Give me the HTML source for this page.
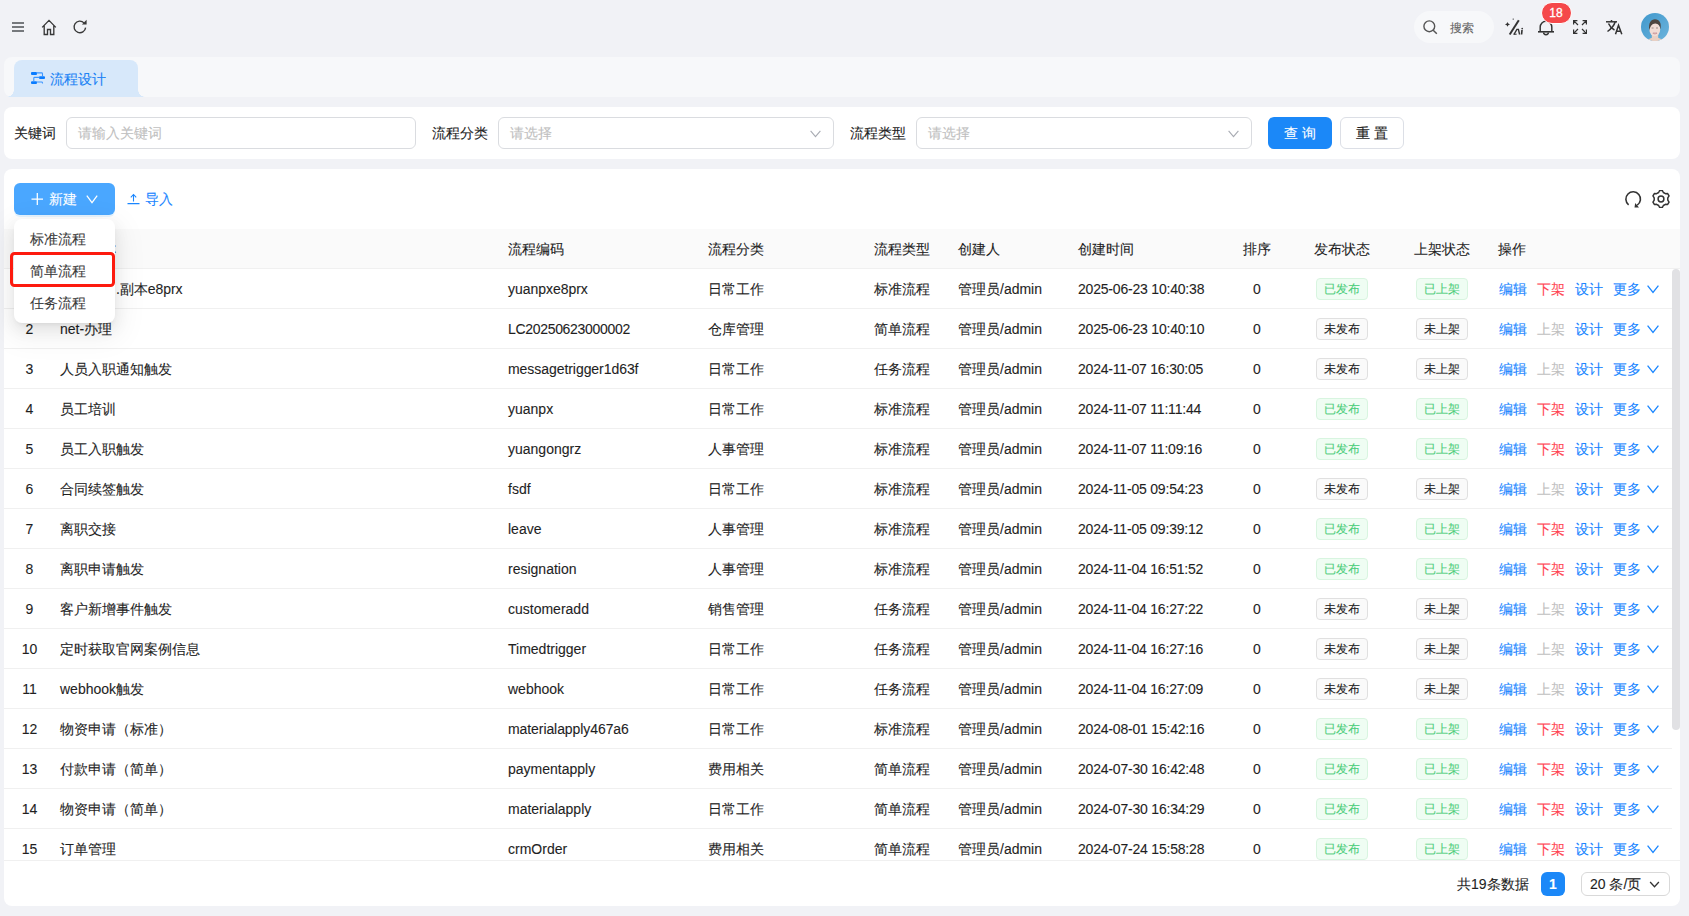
<!DOCTYPE html>
<html><head><meta charset="utf-8">
<style>
*{box-sizing:border-box;margin:0;padding:0}
html,body{width:1689px;height:916px;overflow:hidden;background:#f1f2f6;font-family:"Liberation Sans",sans-serif;font-size:14px;color:#1f1f1f;-webkit-text-stroke:0.1px currentColor}
.abs{position:absolute}
.ic{position:absolute;display:block}
#tabs{position:absolute;left:4px;top:57px;width:1676px;height:40px;background:#f7f8fa;border-radius:8px}
#tab{position:absolute;left:14px;top:60px;width:124px;height:37px;background:#d7e8fa;border-radius:8px 8px 0 0;color:#1a82f5}
#tab:before,#tab:after{content:"";position:absolute;bottom:0;width:7px;height:7px}
#tab:before{left:-7px;background:radial-gradient(circle at 0 0,transparent 6.5px,#d7e8fa 7px)}
#tab:after{right:-7px;background:radial-gradient(circle at 100% 0,transparent 6.5px,#d7e8fa 7px)}
.card{position:absolute;left:4px;width:1676px;background:#fff;border-radius:8px}
.lbl{position:absolute;top:117px;height:32px;line-height:32px;color:#222}
.inp{position:absolute;top:117px;height:32px;border:1px solid #dadce0;border-radius:6px;background:#fff;color:#bfbfbf;line-height:30px;padding-left:11px}
.inp svg{position:absolute;right:12px;top:12px;color:#a8abb2}
.btn{position:absolute;top:117px;height:32px;border-radius:6px;line-height:30px;text-align:center;letter-spacing:4.8px;padding-left:4.8px}
#table{position:absolute;left:4px;top:229px;width:1676px;height:632px;overflow:hidden}
#thead{position:absolute;left:0;top:0;width:1676px;height:40px;background:#fafafa;border-bottom:1px solid #f0f0f0}
#thead span{position:absolute;top:0;line-height:40px;white-space:nowrap}
#tbody{position:absolute;left:0;top:40px;width:1668px;height:591px;overflow:hidden}
.row{position:absolute;left:0;width:1668px;height:40px;border-bottom:1px solid #f0f0f0}
.c{position:absolute;top:0;line-height:40px;white-space:nowrap}
.idx{left:0;width:51px;text-align:center}
.sort{left:1229px;width:48px;text-align:center}
.tag{position:absolute;top:9px;width:52px;height:22px;border-radius:4px;font-size:12px;line-height:20px;text-align:center;border:1px solid}
.tag.ok{color:#4ccd7b;background:#effdf3;border-color:#d8f5e0}
.tag.no{color:#222;background:#fafafa;border-color:#e0e0e0}
.op{position:absolute;top:0;line-height:40px;color:#1a86ff;white-space:nowrap}
.op.red{color:#ff4452}
.op.dis{color:#bfbfbf}
.opchev{position:absolute;left:1643px;top:16px;color:#1a86ff;line-height:0}
#sb{position:absolute;left:1668px;top:40px;width:8px;height:461px;background:#e1e1e4;border-radius:4px}
#tfoot{position:absolute;left:0;top:631px;width:1676px;height:1px;background:#f0f0f0}
.menu{position:absolute;left:14px;top:219px;width:101px;height:104px;background:#fff;border-radius:8px;box-shadow:0 6px 16px 0 rgba(0,0,0,.08),0 3px 6px -4px rgba(0,0,0,.12),0 9px 28px 8px rgba(0,0,0,.05)}
.mi{position:absolute;left:16px;height:32px;line-height:32px;color:#3a3a3a}
</style></head><body>

<!-- header icons -->
<svg class="ic" style="left:12px;top:22px" width="13" height="11" viewBox="0 0 13 11"><rect x="0" y="0" width="12" height="2" fill="#76797d"/><rect x="0" y="4" width="12" height="2" fill="#76797d"/><rect x="0" y="8" width="12" height="2" fill="#76797d"/></svg>
<svg class="ic" style="left:41px;top:19px" width="16" height="17" viewBox="0 0 16 17"><path d="M1.2 8.4 L8 1.4 L14.8 8.4 M3.2 6.8 V15.5 H6.5 V10.5 H9.5 V15.5 H12.8 V6.8" fill="none" stroke="#383838" stroke-width="1.35" stroke-linejoin="miter"/></svg>
<svg class="ic" style="left:72px;top:19px" width="16" height="16" viewBox="0 0 16 16"><path d="M13.6 8.6 A5.8 5.8 0 1 1 12 3.9" fill="none" stroke="#383838" stroke-width="1.35"/><path d="M14.6 0.7 V5.4 H9.9 Z" fill="#383838"/></svg>

<div class="abs" style="left:1414px;top:11px;width:80px;height:32px;border-radius:16px;background:#f7f8fa"></div>
<svg class="ic" style="left:1423px;top:20px" width="15" height="15" viewBox="0 0 15 15"><circle cx="6.3" cy="6.3" r="5.4" fill="none" stroke="#555" stroke-width="1.4"/><path d="M10.2 10.2 L13.8 13.8" stroke="#555" stroke-width="1.5"/></svg>
<div class="abs" style="left:1450px;top:20px;font-size:12px;line-height:16px;color:#666">搜索</div>
<svg class="ic" style="left:1504px;top:17px" width="20" height="19" viewBox="0 0 20 19"><path d="M3.5 5.1 Q3.8 7.1 6 7.4 Q3.8 7.7 3.5 9.7 Q3.2 7.7 1 7.4 Q3.2 7.1 3.5 5.1 Z" fill="#333"/><circle cx="9.2" cy="2.1" r="0.7" fill="#333"/><path d="M14.8 3.3 L5.7 17.5" stroke="#333" stroke-width="2"/><path d="M9.9 17.5 L12.9 12.4 H14.4 L15.6 17.5" fill="none" stroke="#333" stroke-width="1.4"/><path d="M9.6 17.2 H12.6" stroke="#333" stroke-width="1.1"/><path d="M18 13 L17.6 17.5" stroke="#333" stroke-width="1.6"/><circle cx="18.2" cy="11.6" r="0.85" fill="#333"/></svg>
<svg class="ic" style="left:1537px;top:19px" width="18" height="17" viewBox="0 0 18 17"><path d="M3.2 12.6 V8 A5.8 5.8 0 0 1 14.8 8 V12.6" fill="none" stroke="#333" stroke-width="1.45"/><path d="M1 12.8 H17" stroke="#333" stroke-width="1.6"/><path d="M6.6 13.6 A2.4 2.1 0 0 0 11.4 13.6" fill="none" stroke="#333" stroke-width="1.4"/></svg>
<div class="abs" style="left:1540.5px;top:2px;width:31px;height:22px;border-radius:11px;background:#f5484a;border:1.5px solid #fff;color:#fff;font-size:12px;line-height:20px;text-align:center;-webkit-text-stroke:0.3px #fff">18</div>
<svg class="ic" style="left:1573px;top:20px" width="14" height="14" viewBox="0 0 14 14"><g fill="none" stroke="#333" stroke-width="1.25"><path d="M0.6 4.4 V0.6 H4.4 M0.9 0.9 L5 5"/><path d="M13.4 4.4 V0.6 H9.6 M13.1 0.9 L9 5"/><path d="M0.6 9.6 V13.4 H4.4 M0.9 13.1 L5 9"/><path d="M13.4 9.6 V13.4 H9.6 M13.1 13.1 L9 9"/></g></svg>
<svg class="ic" style="left:1606px;top:20px" width="17" height="15" viewBox="0 0 17 15"><g fill="none" stroke="#333" stroke-width="1.5"><path d="M0 1.8 H11"/><path d="M5.5 0 V1.8"/><path d="M1.5 11.5 C5 9 8 6 9.2 1.8"/><path d="M2.5 3.5 C4 7 6.5 9 8.5 10"/><path d="M9.5 14.3 L12.5 5.2 L15.8 14.3 M10.6 11.2 H14.6"/></g></svg>
<svg class="ic" style="left:1641px;top:13px" width="28" height="28" viewBox="0 0 28 28"><defs><clipPath id="av"><circle cx="14" cy="14" r="14"/></clipPath><linearGradient id="avg" x1="0" y1="0" x2="1" y2="1"><stop offset="0" stop-color="#3f98cc"/><stop offset="1" stop-color="#6db4dc"/></linearGradient></defs><g clip-path="url(#av)"><rect width="28" height="28" fill="url(#avg)"/><ellipse cx="14" cy="31" rx="10" ry="6.5" fill="#e6cdbf"/><rect x="10.8" y="20" width="6.4" height="8" fill="#e9d0c4"/><ellipse cx="13.8" cy="16.4" rx="5.4" ry="6.8" fill="#f1dcd5"/><path d="M8.3 17.5 C7.2 9.5 10 6.2 14 6.2 C18.5 6.2 20.6 9.8 19.5 16.5 C19 12.5 17.6 10.6 14.2 10.4 C11.2 10.6 9.4 12.5 8.3 17.5 Z" fill="#4e4540"/><path d="M10.6 15 H12.6 M15 15 H17" stroke="#9a8580" stroke-width="0.9"/><ellipse cx="13.9" cy="20.2" rx="2.3" ry="1.1" fill="#c07f80"/><path d="M12.2 19.9 H15.6" stroke="#fff" stroke-width="0.8"/></g></svg>

<!-- tabs -->
<div id="tabs"></div>
<div id="tab">
<svg class="ic" style="left:17px;top:12px" width="14" height="12" viewBox="0 0 14 12"><g fill="#0a7cff"><rect x="0" y="0" width="6" height="3" rx="1"/><rect x="8" y="4.2" width="6" height="2.8" rx="1"/><rect x="0" y="9.2" width="6" height="2.8" rx="1"/></g><g fill="none" stroke="#3d96ff" stroke-width="1.1"><path d="M5.5 0.9 H10.6 Q11.5 0.9 11.5 1.8 V4.5"/><path d="M8.5 5.4 H3.6 Q2.8 5.4 2.8 6.2 V9.5"/><path d="M5.5 10 H10.6 Q11.5 10 11.5 10.9 V11.5"/></g></svg>
<span class="abs" style="left:36px;top:1px;line-height:37px">流程设计</span>
</div>

<!-- filter card -->
<div class="card" style="top:107px;height:52px"></div>
<span class="lbl" style="left:14px">关键词</span>
<div class="inp" style="left:66px;width:350px">请输入关键词</div>
<span class="lbl" style="left:432px">流程分类</span>
<div class="inp" style="left:498px;width:336px">请选择<svg width="11" height="8" viewBox="0 0 11 8"><path d="M0.6 0.8 L5.5 6.6 L10.4 0.8" fill="none" stroke="currentColor" stroke-width="1.1"/></svg></div>
<span class="lbl" style="left:850px">流程类型</span>
<div class="inp" style="left:916px;width:336px">请选择<svg width="11" height="8" viewBox="0 0 11 8"><path d="M0.6 0.8 L5.5 6.6 L10.4 0.8" fill="none" stroke="currentColor" stroke-width="1.1"/></svg></div>
<div class="btn" style="left:1268px;width:64px;background:#1b88f8;color:#fff;line-height:32px">查询</div>
<div class="btn" style="left:1340px;width:64px;border:1px solid #dcdfe6;background:#fff;color:#222">重置</div>

<!-- table card -->
<div class="card" style="top:169px;height:737px"></div>
<div class="abs" style="left:14px;top:183px;width:101px;height:32px;border-radius:6px;background:#4aa7ff;color:#fff;box-shadow:0 2px 0 rgba(5,145,255,.1)">
<svg class="ic" style="left:17px;top:10px" width="13" height="12" viewBox="0 0 13 12"><path d="M6.3 0 V12 M0.5 6 H12" stroke="#fff" stroke-width="1.25"/></svg>
<span class="abs" style="left:35px;top:0;line-height:32px">新建</span>
<svg class="ic" style="left:72px;top:12px" width="12" height="9" viewBox="0 0 12 9"><path d="M0.8 0.6 L6 7.6 L11.2 0.6" fill="none" stroke="#fff" stroke-width="1.25"/></svg>
</div>
<svg class="ic" style="left:127px;top:193px" width="13" height="12" viewBox="0 0 13 12"><path d="M6.5 1.8 V8.6 M3.8 4.4 L6.5 1.5 L9.2 4.4 M0.5 10.6 H12.5" fill="none" stroke="#1a86ff" stroke-width="1.1"/></svg>
<span class="abs" style="left:145px;top:183px;line-height:32px;color:#1a86ff">导入</span>
<svg class="ic" style="left:1624px;top:190px" width="18" height="18" viewBox="0 0 18 18"><path d="M4.6 14.8 A7.3 7.3 0 1 1 13.2 15.2" fill="none" stroke="#333" stroke-width="1.6"/><path d="M11.2 13 L15 17.5 L10.5 17.4 Z" fill="#333"/></svg>
<svg class="ic" style="left:1652px;top:190px" width="18" height="18" viewBox="0 0 18 18"><path d="M11.36 2.52 L10.35 0.51 L7.65 0.51 L6.64 2.52 L4.56 3.71 L2.32 3.59 L0.97 5.92 L2.20 7.80 L2.20 10.20 L0.97 12.08 L2.32 14.41 L4.56 14.29 L6.64 15.48 L7.65 17.49 L10.35 17.49 L11.36 15.48 L13.44 14.29 L15.68 14.41 L17.03 12.08 L15.80 10.20 L15.80 7.80 L17.03 5.92 L15.68 3.59 L13.44 3.71 Z" fill="none" stroke="#333" stroke-width="1.5" stroke-linejoin="round"/><circle cx="9" cy="9" r="2.9" fill="none" stroke="#333" stroke-width="1.5"/></svg>

<div id="table">
<div id="thead">
<span style="left:14px">序号</span><span style="left:56px">流程名称</span><span style="left:504px">流程编码</span><span style="left:704px">流程分类</span><span style="left:870px">流程类型</span><span style="left:954px">创建人</span><span style="left:1074px">创建时间</span><span style="left:1239px">排序</span><span style="left:1310px">发布状态</span><span style="left:1410px">上架状态</span><span style="left:1494px">操作</span>
</div>
<div id="tbody">
<div class="row" style="top:0px">
<span class="c idx">1</span><span class="c" style="left:56px;letter-spacing:-0.030px">员工培训.副本e8prx</span><span class="c" style="left:504px;letter-spacing:-0.033px">yuanpxe8prx</span><span class="c" style="left:704px">日常工作</span><span class="c" style="left:870px">标准流程</span><span class="c" style="left:954px">管理员/admin</span><span class="c" style="left:1074px;letter-spacing:-0.199px">2025-06-23 10:40:38</span><span class="c sort">0</span><span class="tag ok" style="left:1312px">已发布</span><span class="tag ok" style="left:1412px">已上架</span><span class="op" style="left:1495px">编辑</span><span class="op red" style="left:1533px">下架</span><span class="op" style="left:1571px">设计</span><span class="op" style="left:1609px">更多</span><span class="opchev"><svg width="12" height="9" viewBox="0 0 12 9"><path d="M0.6 0.6 L6 7.4 L11.4 0.6" fill="none" stroke="currentColor" stroke-width="1.3"/></svg></span>
</div>
<div class="row" style="top:40px">
<span class="c idx">2</span><span class="c" style="left:56px">net-办理</span><span class="c" style="left:504px;letter-spacing:-0.315px">LC20250623000002</span><span class="c" style="left:704px">仓库管理</span><span class="c" style="left:870px">简单流程</span><span class="c" style="left:954px">管理员/admin</span><span class="c" style="left:1074px;letter-spacing:-0.199px">2025-06-23 10:40:10</span><span class="c sort">0</span><span class="tag no" style="left:1312px">未发布</span><span class="tag no" style="left:1412px">未上架</span><span class="op" style="left:1495px">编辑</span><span class="op dis" style="left:1533px">上架</span><span class="op" style="left:1571px">设计</span><span class="op" style="left:1609px">更多</span><span class="opchev"><svg width="12" height="9" viewBox="0 0 12 9"><path d="M0.6 0.6 L6 7.4 L11.4 0.6" fill="none" stroke="currentColor" stroke-width="1.3"/></svg></span>
</div>
<div class="row" style="top:80px">
<span class="c idx">3</span><span class="c" style="left:56px">人员入职通知触发</span><span class="c" style="left:504px;letter-spacing:-0.057px">messagetrigger1d63f</span><span class="c" style="left:704px">日常工作</span><span class="c" style="left:870px">任务流程</span><span class="c" style="left:954px">管理员/admin</span><span class="c" style="left:1074px;letter-spacing:-0.199px">2024-11-07 16:30:05</span><span class="c sort">0</span><span class="tag no" style="left:1312px">未发布</span><span class="tag no" style="left:1412px">未上架</span><span class="op" style="left:1495px">编辑</span><span class="op dis" style="left:1533px">上架</span><span class="op" style="left:1571px">设计</span><span class="op" style="left:1609px">更多</span><span class="opchev"><svg width="12" height="9" viewBox="0 0 12 9"><path d="M0.6 0.6 L6 7.4 L11.4 0.6" fill="none" stroke="currentColor" stroke-width="1.3"/></svg></span>
</div>
<div class="row" style="top:120px">
<span class="c idx">4</span><span class="c" style="left:56px">员工培训</span><span class="c" style="left:504px">yuanpx</span><span class="c" style="left:704px">日常工作</span><span class="c" style="left:870px">标准流程</span><span class="c" style="left:954px">管理员/admin</span><span class="c" style="left:1074px;letter-spacing:-0.199px">2024-11-07 11:11:44</span><span class="c sort">0</span><span class="tag ok" style="left:1312px">已发布</span><span class="tag ok" style="left:1412px">已上架</span><span class="op" style="left:1495px">编辑</span><span class="op red" style="left:1533px">下架</span><span class="op" style="left:1571px">设计</span><span class="op" style="left:1609px">更多</span><span class="opchev"><svg width="12" height="9" viewBox="0 0 12 9"><path d="M0.6 0.6 L6 7.4 L11.4 0.6" fill="none" stroke="currentColor" stroke-width="1.3"/></svg></span>
</div>
<div class="row" style="top:160px">
<span class="c idx">5</span><span class="c" style="left:56px">员工入职触发</span><span class="c" style="left:504px">yuangongrz</span><span class="c" style="left:704px">人事管理</span><span class="c" style="left:870px">标准流程</span><span class="c" style="left:954px">管理员/admin</span><span class="c" style="left:1074px;letter-spacing:-0.199px">2024-11-07 11:09:16</span><span class="c sort">0</span><span class="tag ok" style="left:1312px">已发布</span><span class="tag ok" style="left:1412px">已上架</span><span class="op" style="left:1495px">编辑</span><span class="op red" style="left:1533px">下架</span><span class="op" style="left:1571px">设计</span><span class="op" style="left:1609px">更多</span><span class="opchev"><svg width="12" height="9" viewBox="0 0 12 9"><path d="M0.6 0.6 L6 7.4 L11.4 0.6" fill="none" stroke="currentColor" stroke-width="1.3"/></svg></span>
</div>
<div class="row" style="top:200px">
<span class="c idx">6</span><span class="c" style="left:56px">合同续签触发</span><span class="c" style="left:504px">fsdf</span><span class="c" style="left:704px">日常工作</span><span class="c" style="left:870px">标准流程</span><span class="c" style="left:954px">管理员/admin</span><span class="c" style="left:1074px;letter-spacing:-0.199px">2024-11-05 09:54:23</span><span class="c sort">0</span><span class="tag no" style="left:1312px">未发布</span><span class="tag no" style="left:1412px">未上架</span><span class="op" style="left:1495px">编辑</span><span class="op dis" style="left:1533px">上架</span><span class="op" style="left:1571px">设计</span><span class="op" style="left:1609px">更多</span><span class="opchev"><svg width="12" height="9" viewBox="0 0 12 9"><path d="M0.6 0.6 L6 7.4 L11.4 0.6" fill="none" stroke="currentColor" stroke-width="1.3"/></svg></span>
</div>
<div class="row" style="top:240px">
<span class="c idx">7</span><span class="c" style="left:56px">离职交接</span><span class="c" style="left:504px">leave</span><span class="c" style="left:704px">人事管理</span><span class="c" style="left:870px">标准流程</span><span class="c" style="left:954px">管理员/admin</span><span class="c" style="left:1074px;letter-spacing:-0.199px">2024-11-05 09:39:12</span><span class="c sort">0</span><span class="tag ok" style="left:1312px">已发布</span><span class="tag ok" style="left:1412px">已上架</span><span class="op" style="left:1495px">编辑</span><span class="op red" style="left:1533px">下架</span><span class="op" style="left:1571px">设计</span><span class="op" style="left:1609px">更多</span><span class="opchev"><svg width="12" height="9" viewBox="0 0 12 9"><path d="M0.6 0.6 L6 7.4 L11.4 0.6" fill="none" stroke="currentColor" stroke-width="1.3"/></svg></span>
</div>
<div class="row" style="top:280px">
<span class="c idx">8</span><span class="c" style="left:56px">离职申请触发</span><span class="c" style="left:504px">resignation</span><span class="c" style="left:704px">人事管理</span><span class="c" style="left:870px">标准流程</span><span class="c" style="left:954px">管理员/admin</span><span class="c" style="left:1074px;letter-spacing:-0.199px">2024-11-04 16:51:52</span><span class="c sort">0</span><span class="tag ok" style="left:1312px">已发布</span><span class="tag ok" style="left:1412px">已上架</span><span class="op" style="left:1495px">编辑</span><span class="op red" style="left:1533px">下架</span><span class="op" style="left:1571px">设计</span><span class="op" style="left:1609px">更多</span><span class="opchev"><svg width="12" height="9" viewBox="0 0 12 9"><path d="M0.6 0.6 L6 7.4 L11.4 0.6" fill="none" stroke="currentColor" stroke-width="1.3"/></svg></span>
</div>
<div class="row" style="top:320px">
<span class="c idx">9</span><span class="c" style="left:56px">客户新增事件触发</span><span class="c" style="left:504px">customeradd</span><span class="c" style="left:704px">销售管理</span><span class="c" style="left:870px">任务流程</span><span class="c" style="left:954px">管理员/admin</span><span class="c" style="left:1074px;letter-spacing:-0.199px">2024-11-04 16:27:22</span><span class="c sort">0</span><span class="tag no" style="left:1312px">未发布</span><span class="tag no" style="left:1412px">未上架</span><span class="op" style="left:1495px">编辑</span><span class="op dis" style="left:1533px">上架</span><span class="op" style="left:1571px">设计</span><span class="op" style="left:1609px">更多</span><span class="opchev"><svg width="12" height="9" viewBox="0 0 12 9"><path d="M0.6 0.6 L6 7.4 L11.4 0.6" fill="none" stroke="currentColor" stroke-width="1.3"/></svg></span>
</div>
<div class="row" style="top:360px">
<span class="c idx">10</span><span class="c" style="left:56px">定时获取官网案例信息</span><span class="c" style="left:504px">Timedtrigger</span><span class="c" style="left:704px">日常工作</span><span class="c" style="left:870px">任务流程</span><span class="c" style="left:954px">管理员/admin</span><span class="c" style="left:1074px;letter-spacing:-0.199px">2024-11-04 16:27:16</span><span class="c sort">0</span><span class="tag no" style="left:1312px">未发布</span><span class="tag no" style="left:1412px">未上架</span><span class="op" style="left:1495px">编辑</span><span class="op dis" style="left:1533px">上架</span><span class="op" style="left:1571px">设计</span><span class="op" style="left:1609px">更多</span><span class="opchev"><svg width="12" height="9" viewBox="0 0 12 9"><path d="M0.6 0.6 L6 7.4 L11.4 0.6" fill="none" stroke="currentColor" stroke-width="1.3"/></svg></span>
</div>
<div class="row" style="top:400px">
<span class="c idx">11</span><span class="c" style="left:56px">webhook触发</span><span class="c" style="left:504px">webhook</span><span class="c" style="left:704px">日常工作</span><span class="c" style="left:870px">任务流程</span><span class="c" style="left:954px">管理员/admin</span><span class="c" style="left:1074px;letter-spacing:-0.199px">2024-11-04 16:27:09</span><span class="c sort">0</span><span class="tag no" style="left:1312px">未发布</span><span class="tag no" style="left:1412px">未上架</span><span class="op" style="left:1495px">编辑</span><span class="op dis" style="left:1533px">上架</span><span class="op" style="left:1571px">设计</span><span class="op" style="left:1609px">更多</span><span class="opchev"><svg width="12" height="9" viewBox="0 0 12 9"><path d="M0.6 0.6 L6 7.4 L11.4 0.6" fill="none" stroke="currentColor" stroke-width="1.3"/></svg></span>
</div>
<div class="row" style="top:440px">
<span class="c idx">12</span><span class="c" style="left:56px">物资申请（标准）</span><span class="c" style="left:504px;letter-spacing:-0.080px">materialapply467a6</span><span class="c" style="left:704px">日常工作</span><span class="c" style="left:870px">标准流程</span><span class="c" style="left:954px">管理员/admin</span><span class="c" style="left:1074px;letter-spacing:-0.199px">2024-08-01 15:42:16</span><span class="c sort">0</span><span class="tag ok" style="left:1312px">已发布</span><span class="tag ok" style="left:1412px">已上架</span><span class="op" style="left:1495px">编辑</span><span class="op red" style="left:1533px">下架</span><span class="op" style="left:1571px">设计</span><span class="op" style="left:1609px">更多</span><span class="opchev"><svg width="12" height="9" viewBox="0 0 12 9"><path d="M0.6 0.6 L6 7.4 L11.4 0.6" fill="none" stroke="currentColor" stroke-width="1.3"/></svg></span>
</div>
<div class="row" style="top:480px">
<span class="c idx">13</span><span class="c" style="left:56px">付款申请（简单）</span><span class="c" style="left:504px">paymentapply</span><span class="c" style="left:704px">费用相关</span><span class="c" style="left:870px">简单流程</span><span class="c" style="left:954px">管理员/admin</span><span class="c" style="left:1074px;letter-spacing:-0.199px">2024-07-30 16:42:48</span><span class="c sort">0</span><span class="tag ok" style="left:1312px">已发布</span><span class="tag ok" style="left:1412px">已上架</span><span class="op" style="left:1495px">编辑</span><span class="op red" style="left:1533px">下架</span><span class="op" style="left:1571px">设计</span><span class="op" style="left:1609px">更多</span><span class="opchev"><svg width="12" height="9" viewBox="0 0 12 9"><path d="M0.6 0.6 L6 7.4 L11.4 0.6" fill="none" stroke="currentColor" stroke-width="1.3"/></svg></span>
</div>
<div class="row" style="top:520px">
<span class="c idx">14</span><span class="c" style="left:56px">物资申请（简单）</span><span class="c" style="left:504px">materialapply</span><span class="c" style="left:704px">日常工作</span><span class="c" style="left:870px">简单流程</span><span class="c" style="left:954px">管理员/admin</span><span class="c" style="left:1074px;letter-spacing:-0.199px">2024-07-30 16:34:29</span><span class="c sort">0</span><span class="tag ok" style="left:1312px">已发布</span><span class="tag ok" style="left:1412px">已上架</span><span class="op" style="left:1495px">编辑</span><span class="op red" style="left:1533px">下架</span><span class="op" style="left:1571px">设计</span><span class="op" style="left:1609px">更多</span><span class="opchev"><svg width="12" height="9" viewBox="0 0 12 9"><path d="M0.6 0.6 L6 7.4 L11.4 0.6" fill="none" stroke="currentColor" stroke-width="1.3"/></svg></span>
</div>
<div class="row" style="top:560px">
<span class="c idx">15</span><span class="c" style="left:56px">订单管理</span><span class="c" style="left:504px">crmOrder</span><span class="c" style="left:704px">费用相关</span><span class="c" style="left:870px">简单流程</span><span class="c" style="left:954px">管理员/admin</span><span class="c" style="left:1074px;letter-spacing:-0.199px">2024-07-24 15:58:28</span><span class="c sort">0</span><span class="tag ok" style="left:1312px">已发布</span><span class="tag ok" style="left:1412px">已上架</span><span class="op" style="left:1495px">编辑</span><span class="op red" style="left:1533px">下架</span><span class="op" style="left:1571px">设计</span><span class="op" style="left:1609px">更多</span><span class="opchev"><svg width="12" height="9" viewBox="0 0 12 9"><path d="M0.6 0.6 L6 7.4 L11.4 0.6" fill="none" stroke="currentColor" stroke-width="1.3"/></svg></span>
</div>
<div class="row" style="top:600px">
<span class="c idx">16</span><span class="c" style="left:56px;letter-spacing:-0.072px">订单管理2</span><span class="c" style="left:504px;letter-spacing:-0.040px">crmOrder2</span><span class="c" style="left:704px">费用相关</span><span class="c" style="left:870px">简单流程</span><span class="c" style="left:954px">管理员/admin</span><span class="c" style="left:1074px;letter-spacing:-0.199px">2024-07-24 15:58:28</span><span class="c sort">0</span><span class="tag ok" style="left:1312px">已发布</span><span class="tag ok" style="left:1412px">已上架</span><span class="op" style="left:1495px">编辑</span><span class="op red" style="left:1533px">下架</span><span class="op" style="left:1571px">设计</span><span class="op" style="left:1609px">更多</span><span class="opchev"><svg width="12" height="9" viewBox="0 0 12 9"><path d="M0.6 0.6 L6 7.4 L11.4 0.6" fill="none" stroke="currentColor" stroke-width="1.3"/></svg></span>
</div>
</div>
<div id="sb"></div>
<div id="tfoot"></div>
</div>

<!-- pagination -->
<span class="abs" style="left:1457px;top:872px;line-height:24px">共19条数据</span>
<div class="abs" style="left:1541px;top:872px;width:24px;height:24px;border-radius:6px;background:#1b88f8;color:#fff;text-align:center;line-height:24px;font-weight:bold">1</div>
<div class="abs" style="left:1581px;top:872px;width:89px;height:24px;border-radius:6px;border:1px solid #d9d9d9;line-height:22px;padding-left:8px">20 条/页<svg class="ic" style="left:67px;top:8px" width="11" height="7" viewBox="0 0 12 8"><path d="M1 1.2 L6 6.6 L11 1.2" fill="none" stroke="#333" stroke-width="1.5"/></svg></div>

<!-- dropdown menu -->
<div class="menu">
<span class="mi" style="top:4px">标准流程</span>
<span class="mi" style="top:36px">简单流程</span>
<span class="mi" style="top:68px">任务流程</span>
</div>
<div class="abs" style="left:10.4px;top:252.1px;width:104.8px;height:35.4px;border:3.3px solid #fd1a0e;border-radius:4.5px"></div>

</body></html>
